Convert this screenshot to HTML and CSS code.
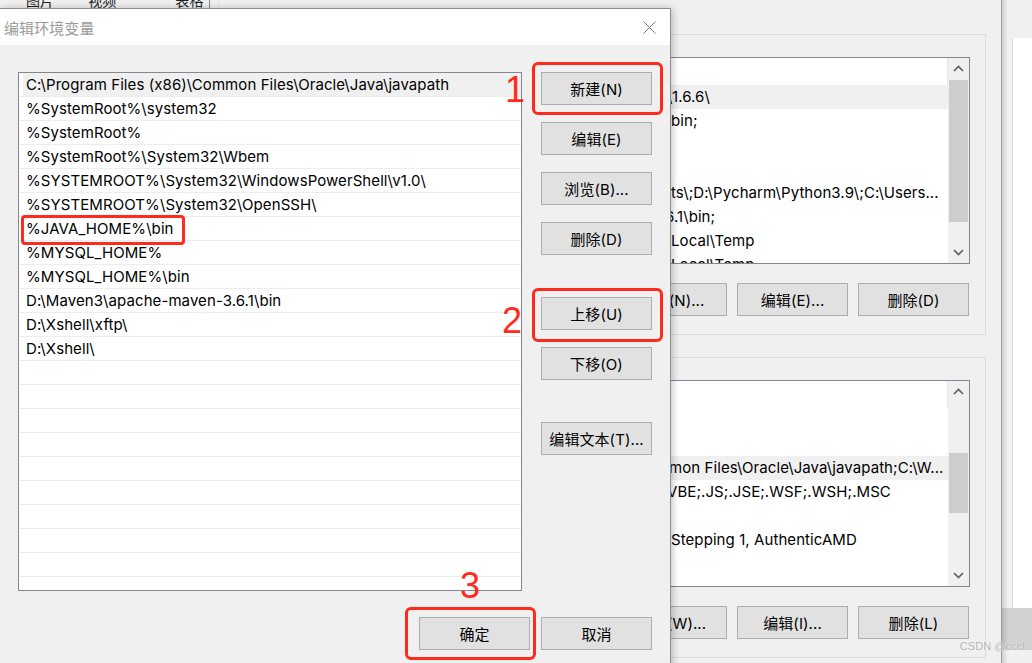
FILE: index.html
```html
<!DOCTYPE html>
<html lang="zh-CN">
<head>
<meta charset="utf-8">
<title>编辑环境变量</title>
<link rel="stylesheet" href="styles.css">
</head>
<body>
<div class="desk">
  <div class="tabs"><span class="tab t1">图片</span><span class="tab t2">视频</span><span class="tab t3">表格</span></div>

  <div class="farwin"><div class="far-panel"></div><div class="far-foot"></div></div>

  <div class="env">
    <section class="grp">
      <div class="elist">
        <div class="elist-main">
          <div class="ehead"></div>
          <div class="erow sel c3">\1.6.6\</div>
          <div class="erow">bin;</div>
          <div class="erow"></div>
          <div class="erow"></div>
          <div class="erow">ts\;D:\Pycharm\Python3.9\;C:\Users...</div>
          <div class="erow c5">6.1\bin;</div>
          <div class="erow">Local\Temp</div>
          <div class="erow">Local\Temp</div>
        </div>
        <div class="sbar">
          <div class="sarrow"><svg width="11" height="7" viewBox="0 0 11 7"><polyline points="1,6 5.5,1.5 10,6" fill="none" stroke="#606060" stroke-width="1.7"/></svg></div>
          <div class="strack"><div class="sthumb th1"></div></div>
          <div class="sarrow"><svg width="11" height="7" viewBox="0 0 11 7"><polyline points="1,1 5.5,5.5 10,1" fill="none" stroke="#606060" stroke-width="1.7"/></svg></div>
        </div>
      </div>
      <div class="ebtns"><button class="btn">新建(N)...</button><button class="btn">编辑(E)...</button><button class="btn">删除(D)</button></div>
    </section>
    <section class="grp">
      <div class="elist">
        <div class="elist-main">
          <div class="ehead"></div>
          <div class="erow"></div>
          <div class="erow"></div>
          <div class="erow sel c1">mon Files\Oracle\Java\javapath;C:\W...</div>
          <div class="erow c3">VBE;.JS;.JSE;.WSF;.WSH;.MSC</div>
          <div class="erow"></div>
          <div class="erow">Stepping 1, AuthenticAMD</div>
          <div class="erow"></div>
          <div class="erow"></div>
        </div>
        <div class="sbar">
          <div class="sarrow"><svg width="11" height="7" viewBox="0 0 11 7"><polyline points="1,6 5.5,1.5 10,6" fill="none" stroke="#606060" stroke-width="1.7"/></svg></div>
          <div class="strack"><div class="sthumb th2"></div></div>
          <div class="sarrow"><svg width="11" height="7" viewBox="0 0 11 7"><polyline points="1,1 5.5,5.5 10,1" fill="none" stroke="#606060" stroke-width="1.7"/></svg></div>
        </div>
      </div>
      <div class="ebtns"><button class="btn">新建(W)...</button><button class="btn">编辑(I)...</button><button class="btn">删除(L)</button></div>
    </section>
  </div>

  <div class="dlg">
    <div class="dlg-title">
      <span class="dlg-caption">编辑环境变量</span>
      <span class="dlg-close"><svg width="13" height="13" viewBox="0 0 13 13"><path d="M0.5 0.5L12.5 12.5M12.5 0.5L0.5 12.5" stroke="#7a7a7a" stroke-width="1" fill="none"/></svg></span>
    </div>
    <div class="dlg-body">
      <div class="dlg-main">
        <div class="plist">
          <div class="prow sel">C:\Program Files (x86)\Common Files\Oracle\Java\javapath</div>
          <div class="prow">%SystemRoot%\system32</div>
          <div class="prow">%SystemRoot%</div>
          <div class="prow">%SystemRoot%\System32\Wbem</div>
          <div class="prow">%SYSTEMROOT%\System32\WindowsPowerShell\v1.0\</div>
          <div class="prow">%SYSTEMROOT%\System32\OpenSSH\</div>
          <div class="prow">%JAVA_HOME%\bin</div>
          <div class="prow">%MYSQL_HOME%</div>
          <div class="prow">%MYSQL_HOME%\bin</div>
          <div class="prow">D:\Maven3\apache-maven-3.6.1\bin</div>
          <div class="prow">D:\Xshell\xftp\</div>
          <div class="prow">D:\Xshell\</div>
          <div class="prow"></div>
          <div class="prow"></div>
          <div class="prow"></div>
          <div class="prow"></div>
          <div class="prow"></div>
          <div class="prow"></div>
          <div class="prow"></div>
          <div class="prow"></div>
          <div class="prow"></div>
          <div class="prow"></div>
        </div>
        <div class="side">
          <button class="btn">新建(N)</button>
          <button class="btn">编辑(E)</button>
          <button class="btn">浏览(B)...</button>
          <button class="btn">删除(D)</button>
          <button class="btn far">上移(U)</button>
          <button class="btn">下移(O)</button>
          <button class="btn far">编辑文本(T)...</button>
        </div>
      </div>
      <div class="dlg-foot">
        <button class="btn">确定</button>
        <button class="btn">取消</button>
      </div>
    </div>
  </div>

  <div class="mark mk-java"></div>
  <div class="mark mk-new"></div>
  <div class="mark mk-up"></div>
  <div class="mark mk-ok"></div>
  <span class="num n1">1</span>
  <span class="num n2">2</span>
  <span class="num n3">3</span>

  <div class="wm">CSDN @cccl.</div>
</div>
</body>
</html>
```

FILE: styles.css
```css
* { box-sizing: border-box; }
html, body { margin: 0; padding: 0; }
body {
  width: 1032px;
  height: 663px;
  overflow: hidden;
  background: #f0f0f0;
  font-family: "Inter", "Noto Sans CJK SC", sans-serif;
  font-size: 15px;
  letter-spacing: 0.08px;
  color: #000;
}
.desk { position: relative; width: 1032px; height: 663px; overflow: hidden; }

/* background app tabs */
.tabs {
  position: absolute; left: 0; top: -11px; height: 22px; width: 230px;
  display: flex; align-items: center;
  font-family: "Noto Sans CJK SC", sans-serif; font-size: 14px; color: #222;
}
.tab { display: block; height: 22px; line-height: 22px; }
.tab.t1 { margin-left: 26px; }
.tab.t2 { margin-left: 34px; }
.tab.t3 { margin-left: 59px; padding-right: 5px; border-right: 1px solid #8a8a8a; }

/* far right window */
.farwin {
  position: absolute; left: 1002px; top: 0; width: 30px; height: 663px;
  background: #f0f0f0; display: flex; flex-direction: column; align-items: flex-end;
}
.far-panel { margin-top: 38px; width: 20px; height: 570px; background: #fff; border-left: 1px solid #dadada; }
.far-foot { width: 30px; height: 42px; background: #d2d2d2; }

/* environment variables window */
.env {
  position: absolute; left: 220px; top: -40px; width: 782px; height: 720px;
  background: #f0f0f0;
  border-right: 1px solid #9c9c9c;
  box-shadow: 2px 0 5px rgba(0,0,0,0.18);
  padding: 74px 15px 0 16px;
  display: flex; flex-direction: column; gap: 22px;
}
.grp {
  border: 1px solid #dcdcdc;
  padding: 22px 15px 18px 16px;
  display: flex; flex-direction: column; gap: 19px;
}
.elist {
  height: 207px; background: #fff; border: 1px solid #828790;
  display: flex; overflow: hidden;
}
.elist-main { flex: 1; overflow: hidden; }
.ehead { height: 27px; border-right: 1px solid #e5e5e5; }
.erow { height: 24px; line-height: 24px; white-space: nowrap; padding-left: 417px; }
.erow.c1 { padding-left: 415px; }
.erow.c3 { padding-left: 413px; }
.erow.c5 { padding-left: 411px; }
.erow.sel { background: #f0f0f0; }
.sbar { width: 21px; background: #f0f0f0; display: flex; flex-direction: column; }
.sarrow { height: 21px; display: flex; align-items: center; justify-content: center; }
.strack { flex: 1; }
.sthumb { background: #cdcdcd; margin: 0 1px; }
.th1 { margin-top: 1px; height: 142px; }
.th2 { margin-top: 51px; height: 60px; }
.ebtns { display: flex; justify-content: flex-end; gap: 10px; padding-right: 1px; }

/* buttons */
.btn {
  width: 111px; height: 33px; padding: 0;
  background: #e1e1e1; border: 1px solid #adadad; border-radius: 0;
  font-family: "Inter", "Noto Sans CJK SC", sans-serif; font-size: 15px; color: #000;
  letter-spacing: 0.08px;
  display: flex; align-items: center; justify-content: center;
}

/* edit dialog */
.dlg {
  position: absolute; left: -1px; top: 8px; width: 672px; height: 700px;
  background: #f0f0f0; border: 1px solid #8e8e8e;
  box-shadow: 2px 0 7px rgba(0,0,0,0.22);
  display: flex; flex-direction: column;
}
.dlg-title {
  height: 36px; background: #fff; flex: none;
  display: flex; align-items: center; justify-content: space-between;
  padding-left: 4px;
}
.dlg-caption { font-family: "Noto Sans CJK SC", sans-serif; font-size: 15px; color: #9a9a9a; }
.dlg-close { width: 42px; height: 36px; display: flex; align-items: center; justify-content: center; }
.dlg-body { padding: 27px 0 0 18px; display: flex; flex-direction: column; }
.dlg-main { display: flex; align-items: flex-start; }
.plist {
  width: 504px; height: 519px; background: #fff; border: 1px solid #828790; overflow: hidden;
}
.prow {
  height: 24px; border-bottom: 1px solid #ededed; padding-left: 7px;
  display: flex; align-items: center; white-space: nowrap;
}
.prow.sel { background: linear-gradient(to right, #fff 4px, #f0f0f0 4px); }
.side { margin-left: 19px; display: flex; flex-direction: column; gap: 17px; }
.side .far { margin-top: 25px; }
.dlg-foot { display: flex; gap: 11px; margin-top: 26px; padding-left: 401px; }

/* red annotations */
.mark { position: absolute; border: 3px solid #ff2a1c; border-radius: 6px; }
.mk-java { left: 21px; top: 215px; width: 164px; height: 30px; border-radius: 4px; }
.mk-new { left: 532px; top: 62px; width: 131px; height: 53px; }
.mk-up { left: 532px; top: 288px; width: 131px; height: 54px; }
.mk-ok { left: 405px; top: 607px; width: 131px; height: 53px; }
.num {
  position: absolute; font-family: "Liberation Sans", sans-serif; font-size: 36px; line-height: 36px;
  color: #ff2a1c;
}
.n1 { left: 505px; top: 72px; }
.n2 { left: 502px; top: 303px; }
.n3 { left: 460px; top: 568px; }

.wm {
  position: absolute; right: 4px; top: 640px;
  font-family: "Liberation Sans", sans-serif; font-size: 11px; color: #b4b4b4;
  text-shadow: 0 0 2px #fff;
}
```
